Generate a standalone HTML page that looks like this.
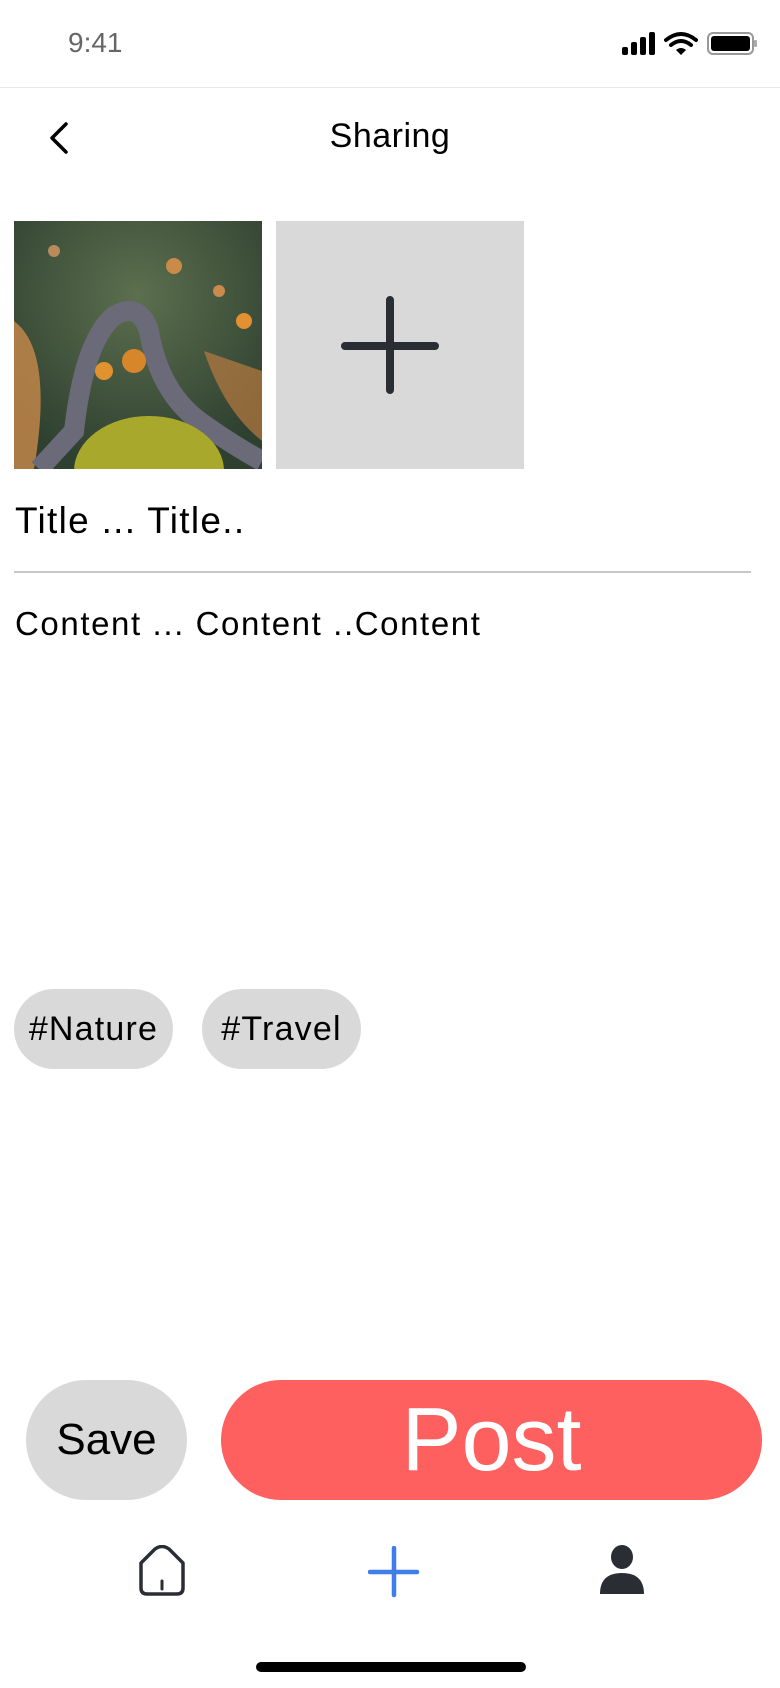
<!DOCTYPE html>
<html><head><meta charset="utf-8"><style>
*{margin:0;padding:0;box-sizing:border-box}
body{width:780px;height:1688px;background:#fff;position:relative;overflow:hidden;font-family:"Liberation Sans",sans-serif;color:#000}
.a{position:absolute}
</style></head><body>
<div class="a" style="left:68px;top:27px;font-size:28px;color:#666;font-weight:300">9:41</div>
<svg class="a" style="left:620px;top:30px" width="140" height="28" viewBox="0 0 140 28">
<rect x="2" y="17" width="6" height="8" rx="2" fill="#000"/><rect x="11" y="12" width="6" height="13" rx="2" fill="#000"/><rect x="20" y="7" width="6" height="18" rx="2" fill="#000"/><rect x="29" y="2" width="6" height="23" rx="2" fill="#000"/>
<path d="M46 10 Q61 -2 76 10" stroke="#000" stroke-width="4" fill="none" stroke-linecap="round"/><path d="M51 15 Q61 7 71 15" stroke="#000" stroke-width="4" fill="none" stroke-linecap="round"/><path d="M56 20 L61 25 L66 20 Q61 16 56 20Z" fill="#000"/>
<rect x="88" y="3" width="45" height="21" rx="5" fill="none" stroke="#999" stroke-width="2"/><rect x="91" y="6" width="39" height="15" rx="3" fill="#000"/><rect x="134" y="10" width="3" height="7" rx="1" fill="#aaa"/>
</svg>
<div class="a" style="left:0;top:87px;width:780px;height:1px;background:#e8e8e8"></div>
<svg class="a" style="left:44px;top:120px" width="30" height="36" viewBox="0 0 30 36"><path d="M22 4 L8 18 L22 32" stroke="#000" stroke-width="3.5" fill="none" stroke-linecap="round" stroke-linejoin="round"/></svg>
<div class="a" style="left:0;width:780px;top:117px;text-align:center;font-size:34px;letter-spacing:0.5px">Sharing</div>
<svg class="a" style="left:14px;top:221px" width="248" height="248" viewBox="0 0 248 248">
<defs><radialGradient id="n" cx="0.5" cy="0.3" r="0.7"><stop offset="0" stop-color="#5c6f4e"/><stop offset="1" stop-color="#2e4030"/></radialGradient></defs>
<rect width="248" height="248" fill="url(#n)"/>
<path d="M0 100 Q40 130 20 248 L0 248Z" fill="#c98a4a" opacity="0.8"/>
<path d="M190 130 Q210 190 248 220 L248 150Z" fill="#b97a40" opacity="0.7"/>
<path d="M25 248 L60 210 Q70 120 100 95 Q125 80 135 110 Q145 170 185 200 Q220 225 248 240" stroke="#6a6a78" stroke-width="20" fill="none"/>
<circle cx="120" cy="140" r="12" fill="#d8862a"/><circle cx="90" cy="150" r="9" fill="#e0922e"/><circle cx="230" cy="100" r="8" fill="#e39030"/><circle cx="160" cy="45" r="8" fill="#c98a4a"/><circle cx="205" cy="70" r="6" fill="#c98a4a"/><circle cx="40" cy="30" r="6" fill="#b98a5a"/>
<ellipse cx="135" cy="250" rx="75" ry="55" fill="#a8a82c"/>
</svg>
<div class="a" style="left:276px;top:221px;width:248px;height:248px;background:#d9d9d9"></div>
<svg class="a" style="left:340px;top:296px" width="100" height="100" viewBox="0 0 100 100"><path d="M50 4 V94 M5 50 H95" stroke="#2a2d33" stroke-width="8" stroke-linecap="round"/></svg>
<div class="a" style="left:15px;top:500px;font-size:37px;letter-spacing:1.3px">Title ... Title..</div>
<div class="a" style="left:14px;top:571px;width:737px;height:2px;background:#c8c8c8"></div>
<div class="a" style="left:15px;top:605px;font-size:33px;letter-spacing:1.6px">Content ... Content ..Content</div>
<div class="a" style="left:14px;top:989px;width:159px;height:80px;border-radius:40px;background:#d9d9d9;font-size:34px;letter-spacing:1.2px;line-height:80px;text-align:center">#Nature</div>
<div class="a" style="left:202px;top:989px;width:159px;height:80px;border-radius:40px;background:#d9d9d9;font-size:34px;letter-spacing:1.2px;line-height:80px;text-align:center">#Travel</div>
<div class="a" style="left:26px;top:1380px;width:161px;height:120px;border-radius:60px;background:#d9d9d9;font-size:44px;line-height:120px;text-align:center">Save</div>
<div class="a" style="left:221px;top:1380px;width:541px;height:120px;border-radius:60px;background:#fe5f5f;color:#fff;font-size:90px;line-height:120px;text-align:center">Post</div>
<svg class="a" style="left:137px;top:1545px" width="52" height="52" viewBox="0 0 52 52"><path d="M4 18 L18 4 Q25 -1 32 4 L46 18 V43 Q46 49 40 49 H10 Q4 49 4 43Z" stroke="#2a2d33" stroke-width="3.5" fill="none" stroke-linejoin="round"/><path d="M25 36 V44" stroke="#2a2d33" stroke-width="3" stroke-linecap="round"/></svg>
<svg class="a" style="left:368px;top:1546px" width="52" height="52" viewBox="0 0 52 52"><path d="M26 2 V49 M2 26 H49" stroke="#3f7ee8" stroke-width="4.5" stroke-linecap="round"/></svg>
<svg class="a" style="left:598px;top:1545px" width="48" height="52" viewBox="0 0 48 52"><ellipse cx="24" cy="12" rx="11" ry="12" fill="#2a2d33"/><path d="M2 49 Q2 28 24 28 Q46 28 46 49Z" fill="#2a2d33"/></svg>
<div class="a" style="left:256px;top:1662px;width:270px;height:10px;border-radius:5px;background:#000"></div>
</body></html>
